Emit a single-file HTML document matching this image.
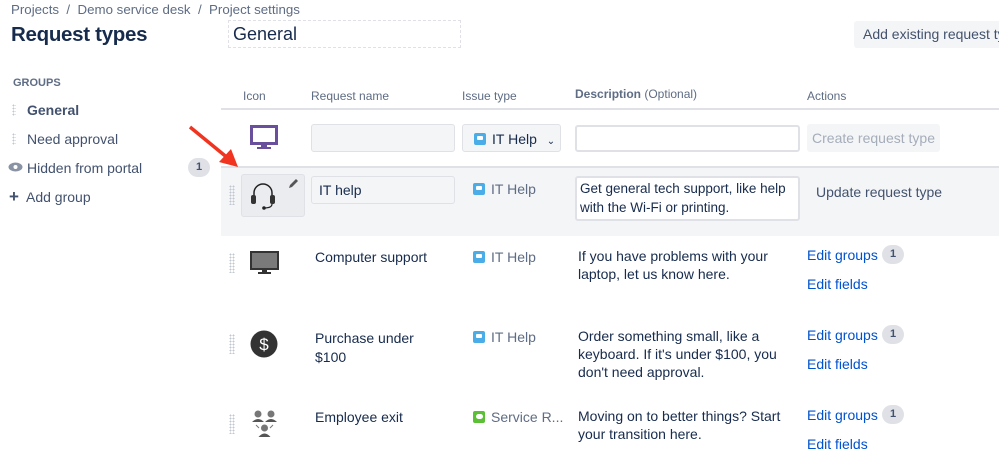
<!DOCTYPE html>
<html><head><meta charset="utf-8"><style>
body{margin:0;width:999px;height:453px;overflow:hidden;background:#fff;font-family:"Liberation Sans",sans-serif;color:#172b4d;position:relative}
.a{position:absolute;white-space:nowrap}
.s14{font-size:14px}
.g{color:#5e6c84}
.lnk{color:#0052cc;font-size:14px}
.badge{position:absolute;background:#dfe1e6;border-radius:10px;font-size:11px;font-weight:bold;color:#42526e;width:22px;height:19px;line-height:19px;text-align:center}
.grip{position:absolute;width:6px;height:20px;background-image:radial-gradient(#c1c7d0 0.8px,transparent 1px);background-size:3px 3px}
.box{position:absolute;border:1px solid #dfe1e6;border-radius:3px;box-sizing:border-box}
.it{display:inline-block;width:12px;height:12px;background:#4bade8;border-radius:2px;vertical-align:-1px;margin-right:6px;position:relative}
.it:after{content:"";position:absolute;left:3px;top:2.5px;width:6px;height:4px;background:#fff;border-radius:1px}
.sr{display:inline-block;width:12px;height:12px;background:#5bc035;border-radius:2px;vertical-align:-1px;margin-right:6px;position:relative}
.sr:after{content:"";position:absolute;left:2.5px;top:3px;width:7px;height:5px;background:#fff;border-radius:3px}
</style></head><body>
<div class="a g" style="left:11px;top:2px;font-size:13.3px">Projects &nbsp;/ &nbsp;Demo service desk &nbsp;/ &nbsp;Project settings</div>
<div class="a" style="left:11px;top:23px;font-size:20.5px;font-weight:bold;letter-spacing:-0.3px">Request types</div>
<div class="a" style="left:228px;top:20px;width:233px;height:28px;border:1px dashed #dfe1e6;box-sizing:border-box;font-size:18px;padding:3px 4px">General</div>
<div class="a s14" style="left:854px;top:21px;width:160px;height:27px;background:#f4f5f7;border-radius:3px;color:#42526e;line-height:27px;padding-left:9px">Add existing request type</div>

<div class="a g" style="left:13px;top:77px;font-size:11px;font-weight:bold">GROUPS</div>
<div class="grip" style="left:12px;top:104px;height:12px;width:4px"></div>
<div class="a s14" style="left:27px;top:102px;font-weight:bold;color:#42526e">General</div>
<div class="grip" style="left:12px;top:133px;height:12px;width:4px"></div>
<div class="a s14" style="left:27px;top:131px;color:#42526e">Need approval</div>
<svg class="a" style="left:8px;top:162px" width="15" height="10"><ellipse cx="7.5" cy="5" rx="7" ry="4.5" fill="#8993a4"/><circle cx="7.5" cy="5" r="2" fill="#fff"/></svg>
<div class="a s14" style="left:27px;top:160px;color:#42526e">Hidden from portal</div>
<div class="badge" style="left:188px;top:158px">1</div>
<div class="a" style="left:9px;top:187px;font-size:17px;font-weight:bold;color:#42526e">+</div>
<div class="a s14" style="left:26px;top:189px;color:#42526e">Add group</div>

<div class="a g" style="left:243px;top:89px;font-size:12px">Icon</div>
<div class="a g" style="left:311px;top:89px;font-size:12px">Request name</div>
<div class="a g" style="left:462px;top:89px;font-size:12px">Issue type</div>
<div class="a g" style="left:575px;top:87px;font-size:12px"><b>Description</b> (Optional)</div>
<div class="a g" style="left:807px;top:89px;font-size:12px">Actions</div>
<div class="a" style="left:221px;top:108px;width:778px;height:2px;background:#dfe1e6"></div>

<svg class="a" style="left:250px;top:125px" width="28" height="26"><rect x="1.5" y="1.5" width="25" height="17" fill="none" stroke="#6a4f9c" stroke-width="3"/><rect x="11" y="19" width="6" height="3" fill="#6a4f9c"/><rect x="7" y="22" width="14" height="2" fill="#6a4f9c"/></svg>
<div class="box" style="left:311px;top:124px;width:144px;height:28px;background:#f4f5f7"></div>
<div class="box s14" style="left:462px;top:124px;width:99px;height:28px;background:#f4f5f7;padding:6px 0 0 11px"><span class="it"></span>IT Help <span style="font-size:10px;margin-left:6px">&#8964;</span></div>
<div class="box" style="left:575px;top:125px;width:225px;height:27px;border:2px solid #dfe1e6"></div>
<div class="a s14" style="left:807px;top:124px;width:133px;height:28px;background:#f4f5f7;border-radius:3px;color:#a5adba;line-height:28px;text-align:center">Create request type</div>

<div class="a" style="left:221px;top:166px;width:778px;height:68px;background:#f4f5f7;border-top:2px solid #dfe1e6"></div>
<div class="grip" style="left:229px;top:185px"></div>
<div class="box" style="left:241px;top:174px;width:64px;height:43px;background:#ebecf0;border-color:#dfe1e6"></div>
<svg class="a" style="left:249px;top:181px" width="30" height="30"><path d="M5 16 V12 a9 9 0 0 1 18 0 V16" fill="none" stroke="#222" stroke-width="1.5"/><rect x="2" y="14" width="5" height="9" rx="2" fill="#333"/><rect x="21" y="14" width="5" height="9" rx="2" fill="#333"/><path d="M23 23 q0 4 -8 4" fill="none" stroke="#222" stroke-width="1.2"/><circle cx="15" cy="27" r="1.8" fill="#222"/></svg>
<svg class="a" style="left:287px;top:178px" width="12" height="12"><path d="M2 10 l1-3 6-6 2 2-6 6z" fill="#555"/></svg>
<div class="box s14" style="left:311px;top:176px;width:144px;height:28px;background:#f4f5f7;padding:5px 0 0 7px">IT help</div>
<div class="a s14 g" style="left:473px;top:181px"><span class="it"></span>IT Help</div>
<div class="box" style="left:575px;top:176px;width:225px;height:45px;background:#fff;border:2px solid #dfe1e6;font-size:13.5px;line-height:19px;padding:1px 0 0 3px;white-space:normal">Get general tech support, like help with the Wi-Fi or printing.</div>
<div class="a s14" style="left:816px;top:184px;color:#42526e">Update request type</div>

<div class="grip" style="left:229px;top:253px"></div>
<svg class="a" style="left:250px;top:251px" width="30" height="24"><rect x="1" y="1" width="27" height="17" fill="#7a7a7a" stroke="#333" stroke-width="2"/><rect x="12" y="18" width="5" height="3" fill="#333"/><rect x="8" y="21" width="13" height="2" fill="#333"/></svg>
<div class="a s14" style="left:315px;top:249px">Computer support</div>
<div class="a s14 g" style="left:473px;top:249px"><span class="it"></span>IT Help</div>
<div class="a s14" style="left:578px;top:247px;line-height:18px">If you have problems with your<br>laptop, let us know here.</div>
<div class="a lnk" style="left:807px;top:247px">Edit groups</div><div class="badge" style="left:882px;top:245px">1</div>
<div class="a lnk" style="left:807px;top:276px">Edit fields</div>

<div class="grip" style="left:229px;top:334px"></div>
<svg class="a" style="left:250px;top:330px" width="28" height="28"><circle cx="14" cy="14" r="13.5" fill="#333"/><text x="14" y="20" font-size="17" fill="#fff" text-anchor="middle" font-family="Liberation Sans">$</text></svg>
<div class="a s14" style="left:315px;top:329px;line-height:19px">Purchase under<br>$100</div>
<div class="a s14 g" style="left:473px;top:329px"><span class="it"></span>IT Help</div>
<div class="a s14" style="left:578px;top:327px;line-height:18px">Order something small, like a<br>keyboard. If it's under $100, you<br>don't need approval.</div>
<div class="a lnk" style="left:807px;top:327px">Edit groups</div><div class="badge" style="left:882px;top:325px">1</div>
<div class="a lnk" style="left:807px;top:356px">Edit fields</div>

<div class="grip" style="left:229px;top:414px"></div>
<svg class="a" style="left:250px;top:410px" width="30" height="28"><circle cx="8" cy="4" r="3.5" fill="#777"/><path d="M2 12 q6-6 12 0z" fill="#555"/><circle cx="21" cy="4" r="3.5" fill="#777"/><path d="M15 12 q6-6 12 0z" fill="#555"/><circle cx="14.5" cy="18" r="3.5" fill="#777"/><path d="M8.5 27 q6-7 12 0z" fill="#555"/><path d="M6 15 l3 3 M23 15 l-3 3" stroke="#777"/></svg>
<div class="a s14" style="left:315px;top:409px">Employee exit</div>
<div class="a s14 g" style="left:473px;top:409px"><span class="sr"></span>Service R...</div>
<div class="a s14" style="left:578px;top:407px;line-height:18px">Moving on to better things? Start<br>your transition here.</div>
<div class="a lnk" style="left:807px;top:407px">Edit groups</div><div class="badge" style="left:882px;top:405px">1</div>
<div class="a lnk" style="left:807px;top:436px">Edit fields</div>

<svg class="a" style="left:185px;top:122px" width="60" height="50"><line x1="5" y1="5" x2="44" y2="37" stroke="#f0341f" stroke-width="3.5"/><path d="M53 45 L34 40 L46 27 Z" fill="#f0341f"/></svg>
</body></html>
